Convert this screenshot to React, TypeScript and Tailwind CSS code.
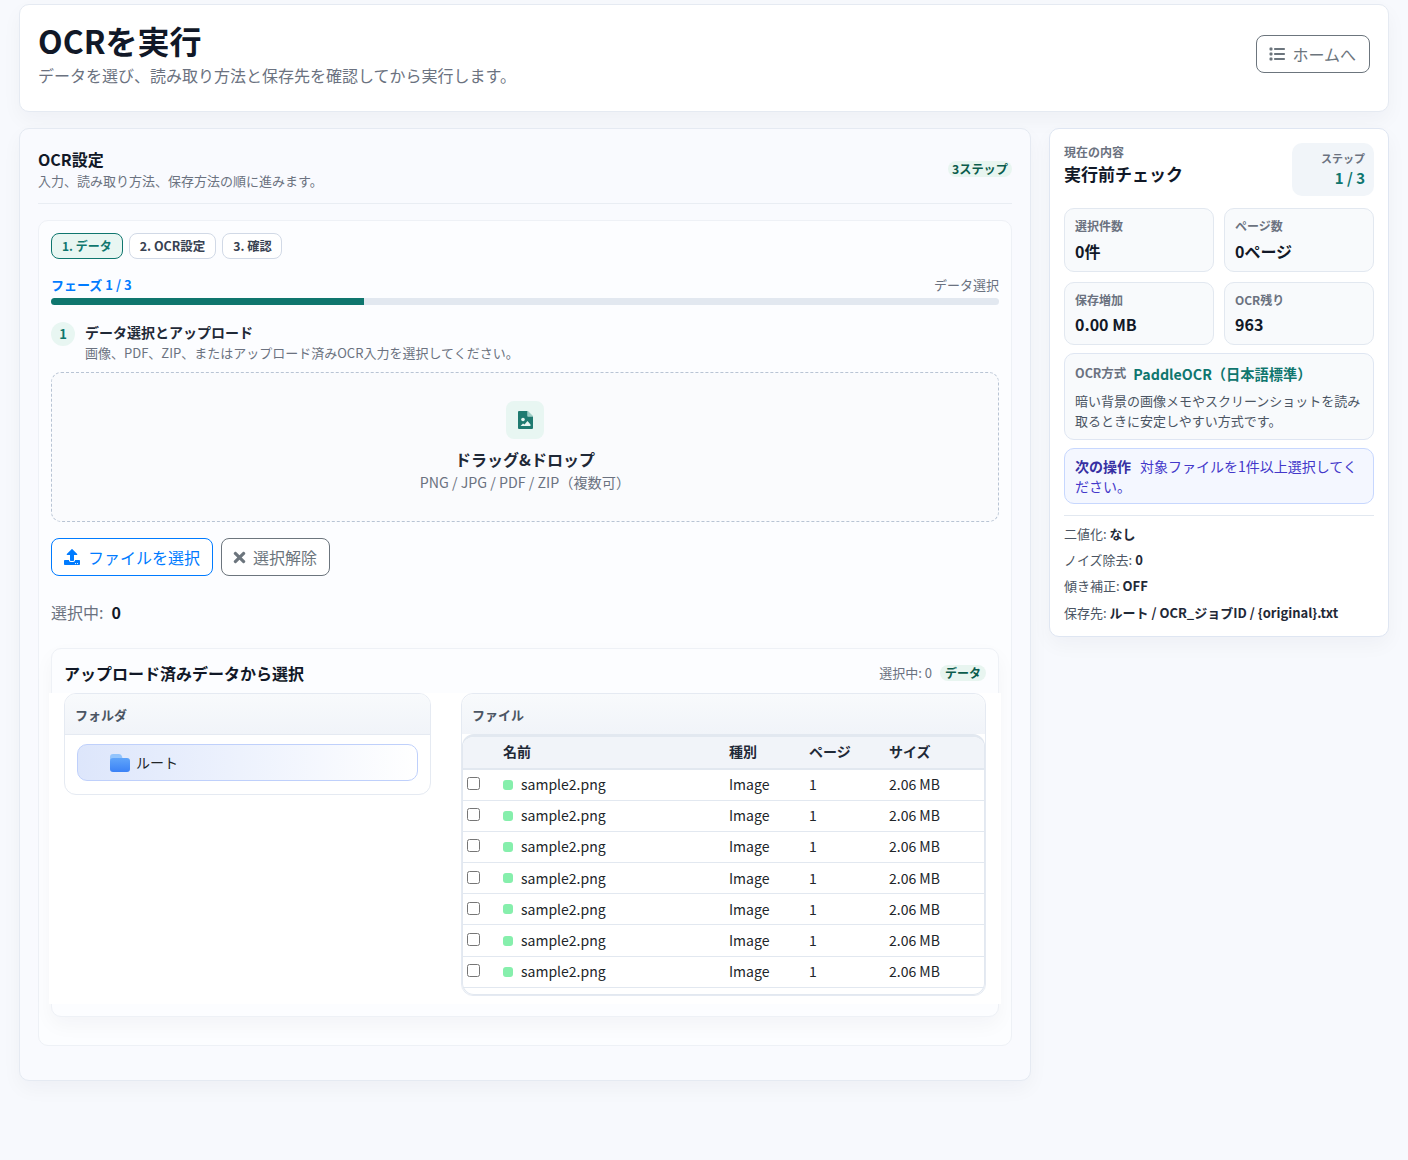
import React from "react";
import { FaTimes, FaUpload } from "react-icons/fa";
import { FaList } from "react-icons/fa6";

const Font = '[font-family:"Noto_Sans_CJK_JP","Noto_Sans",sans-serif]';

function Stat({ label, value }: { label: string; value: string }) {
  return (
    <div className="h-[63.5px] rounded-[10px] border border-[#e2e8f0] bg-[#f8fafc] px-[10px] pt-[8px]">
      <div className="text-[12px] leading-[18px] font-semibold text-[#6b7280]">{label}</div>
      <div className="mt-[3.6px] text-[16px] leading-[24px] font-bold text-[#111827]">{value}</div>
    </div>
  );
}

function Row() {
  return (
    <div className="grid h-[31.2px] grid-cols-[40px_226px_80px_80px_1fr] items-center border-b border-[#e2e8f0] text-[14px] text-[#212529]">
      <div className="pl-[4px]">
        <input type="checkbox" className="mb-[2px] block h-[13px] w-[13px]" />
      </div>
      <div className="flex items-center gap-[8px]">
        <span className="h-[10px] w-[10px] rounded-[3px] bg-[#86efac]" />
        <span>sample2.png</span>
      </div>
      <div>Image</div>
      <div>1</div>
      <div>2.06 MB</div>
    </div>
  );
}

function FolderIcon() {
  return (
    <svg width="21" height="18" viewBox="0 0 21 18" className="shrink-0">
      <defs>
        <linearGradient id="folderBody" x1="0" y1="0" x2="0" y2="1">
          <stop offset="0" stopColor="#60a5fa" />
          <stop offset="1" stopColor="#3b82f6" />
        </linearGradient>
      </defs>
      <path d="M0 3a3 3 0 0 1 3-3h6a3 3 0 0 1 3 2.500l1 3.500h-13z" fill="#93c5fd" />
      <rect x="0" y="4" width="20" height="14" rx="3" fill="url(#folderBody)" />
    </svg>
  );
}

function DropIcon() {
  return (
    <svg width="15" height="18" viewBox="0 0 15 18" className="shrink-0">
      <path d="M1 0h8.500v5.500h5.500v11.500a1 1 0 0 1-1 1h-13a1 1 0 0 1-1-1v-16a1 1 0 0 1 1-1z" fill="#1f7a70" />
      <path d="M10 0l5 5h-5z" fill="#9ccdc4" />
      <circle cx="5" cy="8.500" r="1.800" fill="#e8f6f2" />
      <path d="M2.500 15l2.500-2.500 1.500 1 3-3.500 3 3.500v1.500z" fill="#e8f6f2" />
    </svg>
  );
}

export default function App() {
  return (
    <div className={`${Font} min-h-[1160px] bg-[#f7f9fd] px-[19px] pt-[4px] pb-[79px] text-[#111827]`}>
      <header className="flex h-[108px] items-center justify-between rounded-[10px] border border-[#e5eaf2] bg-white px-[18px] pb-[9px] shadow-[0_8px_20px_rgba(15,23,42,0.04)]">
        <div>
          <h1 className="text-[32px] leading-[38px] font-bold text-[#111827]">OCRを実行</h1>
          <p className="mt-[5px] text-[16px] leading-[23px] text-[#6b7280]">データを選び、読み取り方法と保存先を確認してから実行します。</p>
        </div>
        <button className="flex h-[38px] items-center gap-[7px] rounded-[8px] border border-[#6c757d] bg-white pr-[13px] pl-[12px] text-[16px] text-[#6c757d]">
          <FaList className="h-[16px] w-[16px]" />
          ホームへ
        </button>
      </header>

      <div className="mt-[16px] flex items-start gap-[18px]">
        <main className="w-[1012px] shrink-0 rounded-[10px] border border-[#e5eaf2] bg-[#f9fafe] px-[18px] pt-[18px] pb-[34px] shadow-[0_8px_20px_rgba(15,23,42,0.04)]">
          <div className="flex items-center justify-between border-b border-[#e9edf3] pb-[13px]">
            <div>
              <h2 className="text-[16px] leading-[24px] font-bold text-[#111827]">OCR設定</h2>
              <p className="mt-[1px] text-[13px] leading-[18px] text-[#6b7280]">入力、読み取り方法、保存方法の順に進みます。</p>
            </div>
            <span className="rounded-full bg-[#e8f5f0] px-[4px] text-[12.2px] leading-[16px] font-bold text-[#0b5c4c]">3ステップ</span>
          </div>

          <section className="mt-[16px] rounded-[10px] border border-[#eef1f6] bg-[#fcfdff] px-[12px] pt-[12px] pb-[28px]">
            <div className="flex gap-[6px]">
              <div className="flex h-[26px] items-center rounded-[8px] border border-[#0f766e] bg-[#e8f6f2] px-[10px] text-[12px] font-semibold text-[#0f766e]">1. データ</div>
              <div className="flex h-[26px] items-center rounded-[8px] border border-[#d1d9e6] bg-white px-[10px] text-[12.5px] font-semibold text-[#374151]">2. OCR設定</div>
              <div className="flex h-[26px] items-center rounded-[8px] border border-[#d1d9e6] bg-white pr-[9px] pl-[10px] text-[12.2px] font-semibold text-[#374151]">3. 確認</div>
            </div>
            <div className="mt-[16px] flex items-center justify-between text-[13px] leading-[20px]">
              <span className="font-semibold text-[#007bff]">フェーズ 1 / 3</span>
              <span className="text-[#6b7280]">データ選択</span>
            </div>
            <div className="mt-[3px] h-[7px] overflow-hidden rounded-full bg-[#e2e8f0]">
              <div className="h-full w-[33%] bg-[#0f766e]" />
            </div>

            <div className="mt-[17px] flex items-start gap-[10px]">
              <span className="flex h-[24px] w-[24px] items-center justify-center rounded-full bg-[#e8f6f2] text-[13px] font-bold text-[#0f766e]">1</span>
              <div>
                <div className="text-[14px] leading-[20px] font-bold text-[#1f2937]">データ選択とアップロード</div>
                <div className="mt-[1px] text-[13px] leading-[20px] text-[#6b7280]">画像、PDF、ZIP、またはアップロード済みOCR入力を選択してください。</div>
              </div>
            </div>

            <div className="mt-[9px] flex h-[150px] flex-col items-center rounded-[10px] border border-dashed border-[#b8c4d4] bg-[#fafbfd] pt-[28px]">
              <div className="flex h-[38px] w-[38px] items-center justify-center rounded-[8px] bg-[#e8f6f2]">
                <DropIcon />
              </div>
              <div className="mt-[8px] text-[16px] leading-[24px] font-bold text-[#1f2937]">ドラッグ&ドロップ</div>
              <div className="mt-[1px] text-[14.2px] leading-[21px] text-[#6b7280]">PNG / JPG / PDF / ZIP（複数可）</div>
            </div>

            <div className="mt-[16px] flex gap-[8px]">
              <button className="flex h-[38px] items-center gap-[8px] rounded-[8px] border border-[#007bff] bg-white px-[12px] text-[16px] text-[#007bff]">
                <FaUpload className="h-[16px] w-[16px]" />
                ファイルを選択
              </button>
              <button className="flex h-[38px] items-center gap-[7px] rounded-[8px] border border-[#6c757d] bg-white pr-[12px] pl-[11px] text-[16px] text-[#6c757d]">
                <FaTimes className="h-[17px] w-[13px]" />
                選択解除
              </button>
            </div>

            <div className="mt-[24px] flex items-center gap-[8px] text-[16px] leading-[24px] text-[#6b7280]">
              選択中:
              <span className="font-bold text-[#111827]">0</span>
            </div>

            <div className="mt-[24px] rounded-[10px] border border-[#eef1f6] bg-[#fcfdff] pb-[12px] shadow-[0_8px_20px_rgba(15,23,42,0.04)]">
              <div className="flex h-[44px] items-center justify-between px-[12px] pt-[4px]">
                <h3 className="text-[16px] font-bold text-[#111827]">アップロード済みデータから選択</h3>
                <div className="flex items-center gap-[8px]">
                  <span className="text-[13px] text-[#6b7280]">選択中: 0</span>
                  <span className="rounded-full bg-[#e8f5f0] px-[5px] text-[12px] leading-[16px] font-bold text-[#0b5c4c]">データ</span>
                </div>
              </div>
              <div className="-mx-[3px] flex items-start gap-[30px] bg-white px-[15px] pb-[8px]">
                <div className="w-[367px] shrink-0 overflow-hidden rounded-[12px] border border-[#e5eaf2] bg-white">
                  <div className="flex h-[41px] items-center border-b border-[#e5eaf2] bg-gradient-to-b from-[#f8fafc] to-[#f1f4f9] px-[10px] pt-[2px] text-[13px] font-bold text-[#4b5563]">フォルダ</div>
                  <div className="p-[9px_12px_13px]">
                    <div className="flex h-[37px] items-center gap-[5px] rounded-[10px] border border-[#bfd0fb] bg-gradient-to-r from-[#dde6fb] to-white pl-[32px] text-[14px] text-[#212529]">
                      <FolderIcon />
                      ルート
                    </div>
                  </div>
                </div>
                <div className="min-w-0 flex-1 rounded-[12px] border border-[#e5eaf2] bg-white">
                  <div className="flex h-[40px] items-center rounded-t-[12px] bg-gradient-to-b from-[#f8fafc] to-[#f1f4f9] px-[10px] pt-[2px] text-[13px] font-bold text-[#4b5563]">ファイル</div>
                  <div className="overflow-hidden rounded-[12px] border border-[#e2e8f0] border-t-[3px]">
                    <div className="grid h-[32.5px] grid-cols-[40px_226px_80px_80px_1fr] items-center border-b-2 border-[#e2e8f0] bg-[#f1f4f9] pb-[2px] text-[14px] font-bold text-[#1f2937]">
                      <div />
                      <div>名前</div>
                      <div>種別</div>
                      <div>ページ</div>
                      <div>サイズ</div>
                    </div>
                    {[0, 1, 2, 3, 4, 5, 6].map((i) => (
                      <Row key={i} />
                    ))}
                    <div className="h-[6px]" />
                  </div>
                </div>
              </div>
            </div>
          </section>
        </main>

        <aside className="w-[340px] shrink-0 rounded-[10px] border border-[#dfe6f2] bg-white px-[14px] pt-[14px] pb-[10px] shadow-[0_8px_20px_rgba(15,23,42,0.04)]">
          <div className="flex items-start justify-between">
            <div>
              <div className="text-[12px] leading-[18px] font-semibold text-[#6b7280]">現在の内容</div>
              <div className="text-[17px] leading-[26px] font-bold text-[#111827]">実行前チェック</div>
            </div>
            <div className="flex h-[53px] w-[82px] flex-col items-end justify-center rounded-[10px] bg-[#f1f5f9] pr-[9px] pb-[1px]">
              <div className="text-[11px] leading-[18px] font-semibold text-[#6b7280]">ステップ</div>
              <div className="text-[15px] leading-[22px] font-bold text-[#0f766e]">1 / 3</div>
            </div>
          </div>
          <div className="mt-[12px] grid grid-cols-2 gap-[10px]">
            <Stat label="選択件数" value="0件" />
            <Stat label="ページ数" value="0ページ" />
            <Stat label="保存増加" value="0.00 MB" />
            <Stat label="OCR残り" value="963" />
          </div>
          <div className="mt-[8px] rounded-[10px] border border-[#dfe6f2] bg-[#f8fafc] px-[10px] pt-[7.500px] pb-[8.500px]">
            <div className="flex items-center gap-[7px]">
              <span className="text-[12.5px] font-semibold text-[#6b7280]">OCR方式</span>
              <span className="text-[14.25px] leading-[24px] font-semibold text-[#0f766e]">PaddleOCR（日本語標準）</span>
            </div>
            <p className="mt-[5.500px] text-[13px] leading-[19.8px] text-[#4b5563]">暗い背景の画像メモやスクリーンショットを読み取るときに安定しやすい方式です。</p>
          </div>
          <div className="mt-[8px] rounded-[10px] border border-[#c7d7fe] bg-[#f4f7ff] px-[10px] py-[7px] text-[14px] leading-[20px] text-[#4338ca]">
            <strong className="mr-[9px] font-bold text-[#3730a3]">次の操作</strong>
            対象ファイルを1件以上選択してください。
          </div>
          <div className="mt-[11px] border-t border-[#e2e8f0] pt-[5px] text-[13px] text-[#4b5563]">
            <div className="leading-[26px]">二値化: <b className="font-bold text-[#1f2937]">なし</b></div>
            <div className="leading-[26px]">ノイズ除去: <b className="font-bold text-[#1f2937]">0</b></div>
            <div className="leading-[26px]">傾き補正: <b className="font-bold text-[#1f2937]">OFF</b></div>
            <div className="mt-[1px] leading-[26px]">保存先: <b className="font-bold text-[#1f2937]">ルート / OCR_ジョブID / {"{original}"}.txt</b></div>
          </div>
        </aside>
      </div>
    </div>
  );
}
